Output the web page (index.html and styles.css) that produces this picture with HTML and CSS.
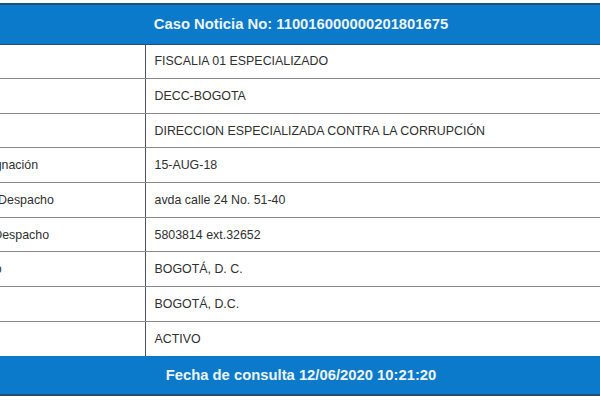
FILE: index.html
```html
<!DOCTYPE html>
<html lang="es">
<head>
<meta charset="utf-8">
<title>Caso Noticia</title>
<link rel="stylesheet" href="styles.css">
</head>
<body>
<div class="frame">
  <table class="caso">
    <thead>
      <tr><th colspan="2" class="band">Caso Noticia No: 110016000000201801675</th></tr>
    </thead>
    <tbody>
      <tr><td class="label">Despacho</td><td class="value">FISCALIA 01 ESPECIALIZADO</td></tr>
      <tr><td class="label">Seccional</td><td class="value">DECC-BOGOTA</td></tr>
      <tr><td class="label">Unidad</td><td class="value">DIRECCION ESPECIALIZADA CONTRA LA CORRUPCIÓN</td></tr>
      <tr><td class="label">Fecha de Asignación</td><td class="value">15-AUG-18</td></tr>
      <tr><td class="label">Dirección del Despacho</td><td class="value">avda calle 24 No. 51-40</td></tr>
      <tr><td class="label">Teléfono del Despacho</td><td class="value">5803814 ext.32652</td></tr>
      <tr><td class="label">Departamento</td><td class="value">BOGOTÁ, D. C.</td></tr>
      <tr><td class="label">Municipio</td><td class="value">BOGOTÁ, D.C.</td></tr>
      <tr><td class="label">Estado</td><td class="value">ACTIVO</td></tr>
    </tbody>
    <tfoot>
      <tr><th colspan="2" class="band">Fecha de consulta 12/06/2020 10:21:20</th></tr>
    </tfoot>
  </table>
</div>
</body>
</html>
```
FILE: styles.css
```css
html, body {
  margin: 0;
  padding: 0;
  background: #ffffff;
  overflow: hidden;
}
.frame {
  width: 600px;
  height: 400px;
  overflow: hidden;
  padding-top: 3px;
  box-sizing: border-box;
}
.caso {
  margin-left: -87px;
  width: 776px;
  border-collapse: collapse;
  font-family: "Liberation Sans", Arial, sans-serif;
  font-size: 12.4px;
  color: #2f2f2f;
}
.band {
  background: #0b7acb;
  color: #eef4fa;
  font-weight: bold;
  font-size: 14.8px;
  text-align: center;
  padding: 0;
  box-sizing: border-box;
}
thead .band {
  height: 40px;
  border-top: 2px solid #1f4f74;
  border-bottom: 1px solid #1f4f74;
}
tfoot .band {
  height: 39px;
  border-bottom: 2px solid #1f4f74;
}
td {
  height: 34.67px;
  padding: 0 0 0 10px;
  border-bottom: 1px solid #8a8a8a;
  vertical-align: middle;
  box-sizing: border-box;
}
tbody tr:last-child td {
  border-bottom: none;
}
.label {
  width: 232px;
  border-right: 1px solid #4c5068;
}
.value {
  padding-left: 9px;
}
```
